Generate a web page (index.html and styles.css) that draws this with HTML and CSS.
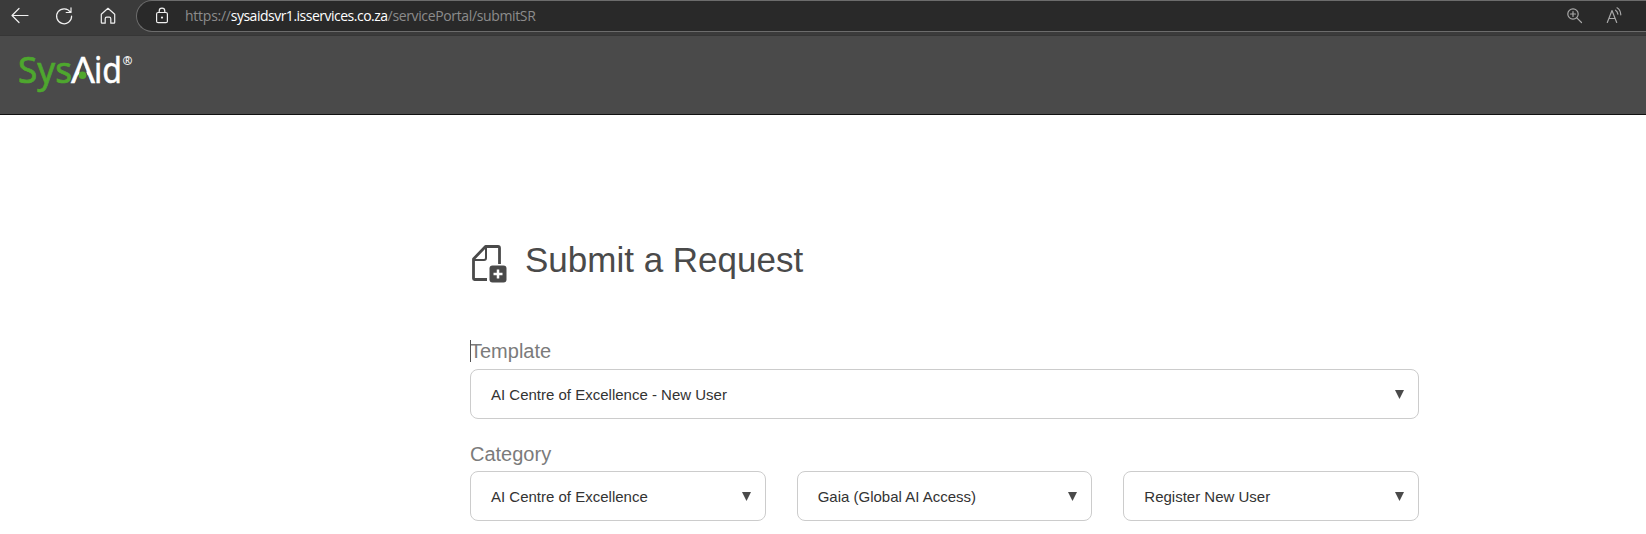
FILE: index.html
```html
<!DOCTYPE html>
<html lang="en">
<head>
<meta charset="utf-8">
<title>Submit a Request</title>
<link rel="stylesheet" href="styles.css">
</head>
<body>
<div class="browser-bar">
  <nav class="nav-buttons">
    <svg class="icon" width="20" height="20" viewBox="0 0 20 20"><path d="M18 9.5H2.3M9 2.5L2 9.5l7 7"/></svg>
    <svg class="icon" width="20" height="20" viewBox="0 0 20 20"><path d="M16.400 6.200A7.500 7.500 0 1 0 17.600 10M17 1.800v4.700h-4.800"/></svg>
    <svg class="icon" width="20" height="20" viewBox="0 0 20 20"><path d="M3.300 8.200L10 2.300l6.700 5.900v8.300q0 .7-.7.7h-3.200v-4.500q0-1.500-1.500-1.500H8.700q-1.500 0-1.500 1.500v4.500H4q-.7 0-.7-.7z"/></svg>
  </nav>
  <div class="address">
    <svg class="icon lock" width="16" height="20" viewBox="0 0 16 20"><rect x="2.600" y="6.500" width="10.800" height="10.200" rx="1.500"/><path d="M5.200 6.500V5a2.800 2.800 0 0 1 5.600 0v1.500"/><circle class="dot" cx="8" cy="11.600" r="1.100"/></svg>
    <div class="url"><span class="scheme">https://</span><span class="host">sysaidsvr1.isservices.co.za</span><span class="path">/servicePortal/submitSR</span></div>
    <svg class="icon tool zoom" width="18" height="18" viewBox="0 0 18 18"><circle cx="7" cy="7" r="5.200"/><path d="M10.800 10.800l4.700 4.700M7 4.500v5M4.500 7h5"/></svg>
    <svg class="icon tool read" width="20" height="18" viewBox="0 0 20 18"><path d="M2.300 15.500L7 3.500l4.700 12M3.800 11.500h6.400M10.500 3.200q2 1.200 2.400 4M12 .8q3.500 2 3.800 7"/></svg>
  </div>
</div>
<header class="site-header">
  <svg class="logo" width="120" height="62" viewBox="0 -12 120 62">
    <text class="green" x="0" y="31" textLength="54" lengthAdjust="spacingAndGlyphs">Sys</text>
    <text class="white" x="53" y="31" textLength="24" lengthAdjust="spacingAndGlyphs">A</text>
    <path class="cut" d="M65 10.500L57.300 32h15.400z"/>
    <circle class="spot" cx="64.500" cy="23.300" r="3.800"/>
    <text class="white" x="76" y="31" textLength="28" lengthAdjust="spacingAndGlyphs">id</text>
    <text class="mark" x="104.500" y="12.500">®</text>
  </svg>
</header>
<main class="form">
  <h1 class="title">
    <svg class="doc" width="37" height="40" viewBox="0 0 37 40">
      <path class="sheet" d="M17 36.500H4.500q-1 0-1-1V16L15.500 3.500H28q1.500 0 1.500 1.500V21"/>
      <path class="fold" d="M4 17H14q2 0 2-2V4"/>
      <rect class="badge" x="19.500" y="22.500" width="17" height="17" rx="3"/>
      <path class="plus" d="M28 26.500v9M23.500 31h9"/>
    </svg>
    <span>Submit a Request</span>
  </h1>
  <div class="label caret">Template</div>
  <div class="select"><span>AI Centre of Excellence - New User</span><svg class="arrow" width="9" height="9" viewBox="0 0 9 9"><path d="M0 0h9L4.500 9z"/></svg></div>
  <div class="label second">Category</div>
  <div class="columns">
    <div class="select"><span>AI Centre of Excellence</span><svg class="arrow" width="9" height="9" viewBox="0 0 9 9"><path d="M0 0h9L4.500 9z"/></svg></div>
    <div class="select"><span>Gaia (Global AI Access)</span><svg class="arrow" width="9" height="9" viewBox="0 0 9 9"><path d="M0 0h9L4.500 9z"/></svg></div>
    <div class="select"><span>Register New User</span><svg class="arrow" width="9" height="9" viewBox="0 0 9 9"><path d="M0 0h9L4.500 9z"/></svg></div>
  </div>
</main>
</body>
</html>
```
FILE: styles.css
```css
* { box-sizing: border-box; }
body { margin: 0; height: 534px; overflow: hidden; background: #fff; font-family: "Liberation Sans", Arial, sans-serif; }
.browser-bar { display: flex; height: 36px; background: #3b3b3b; border-bottom: 1px solid #363636; }
.nav-buttons { display: flex; gap: 24px; width: 136px; padding: 6px 0 0 10px; flex: none; }
.icon { fill: none; stroke: #f0f0f0; stroke-width: 1.2; flex: none; stroke-linecap: round; stroke-linejoin: round; }
.address { flex: 1; display: flex; height: 32px; background: #292929; border: 1px solid #6c6c6c; border-right: 0; border-radius: 16px 0 0 16px; padding-left: 17px; }
.lock { margin-top: 5px; }
.lock .dot { fill: #f0f0f0; stroke: none; }
.url { flex: 1; margin-left: 15px; font: 14px/30px "Open Sans", "Noto Sans", sans-serif; color: #8c8c8c; white-space: nowrap; letter-spacing: -0.36px; }
.scheme { letter-spacing: -0.25px; }
.host { color: #fff; letter-spacing: -0.5px; }
.tool { stroke: #a8a8a8; margin-top: 6px; }
.zoom { margin-right: 21px; }
.read { margin-right: 21px; }
.site-header { height: 79px; background: #4a4a4a; border-bottom: 1px solid #111; padding: 4px 0 0 18px; }
.logo { display: block; font: 37px "Noto Sans", sans-serif; overflow: visible; }
.green { fill: #4ea72e; stroke: #4ea72e; stroke-width: .7; }
.white { fill: #fff; stroke: #fff; stroke-width: .5; }
.mark { fill: #eee; font-size: 12px; font-weight: 700; }
.cut { fill: #4a4a4a; }
.spot { fill: #4ea72e; }
.form { width: 949px; margin-left: 470px; padding-top: 127px; }
.title { display: flex; gap: 18px; margin: 0; height: 84px; font-size: 35px; font-weight: 400; line-height: 36px; color: #4a4a4a; white-space: nowrap; }
.doc { margin-top: 1px; flex: none; }
.sheet { fill: none; stroke: #4a4a4a; stroke-width: 2.8; stroke-linejoin: round; }
.fold { fill: none; stroke: #4a4a4a; stroke-width: 2; }
.badge { fill: #4a4a4a; }
.plus { fill: none; stroke: #fff; stroke-width: 2.5; }
.label { height: 43px; padding-top: 14px; font-size: 20px; line-height: 23px; color: #7b7b7b; }
.caret { position: relative; }
.caret::before { content: ""; position: absolute; left: 0; top: 14px; width: 1px; height: 22px; background: #555; }
.second { height: 52px; padding-top: 24px; }
.select { display: flex; align-items: center; justify-content: space-between; height: 50px; border: 1px solid #ccc; border-radius: 8px; padding: 0 14px 0 20px; font-size: 15px; color: #333; }
.arrow { fill: #4a4a4a; }
.columns { display: grid; grid-template-columns: repeat(3, 1fr); gap: 31px; }
```
